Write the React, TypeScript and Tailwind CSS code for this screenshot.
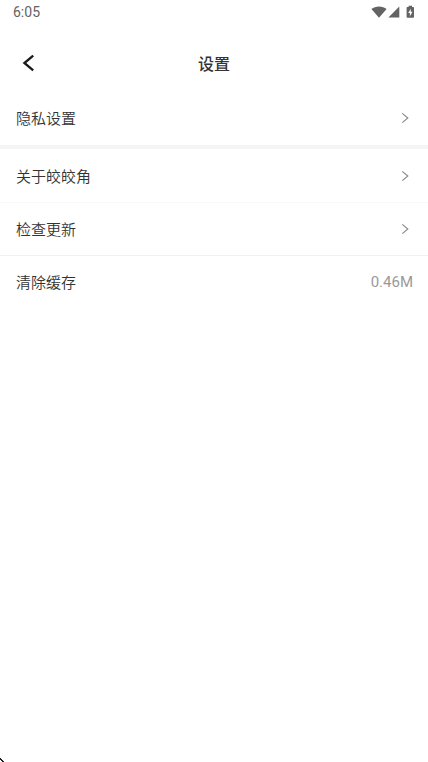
import React from 'react';
import clsx from 'clsx';

interface SettingRowProps {
  label: string;
  value?: string;
  className?: string;
}

const StatusBar: React.FC = () => (
  <div className="flex h-6 items-center justify-between px-[13px] text-[#636363]">
    <span className="font-['Roboto',sans-serif] text-[14px] leading-6">6:05</span>
    <div className="flex items-center">
      <svg width="16" height="12" viewBox="0 0 16 12" fill="currentColor" aria-hidden="true">
        <path d="M0.4 3.1C2.5 1.3 5.1 0.4 8 0.4s5.5 0.9 7.6 2.7L8 11.8z" />
      </svg>
      <svg className="ml-px" width="12" height="12" viewBox="0 0 12 12" fill="currentColor" aria-hidden="true">
        <path d="M11.3 0.6v11H0.4z" />
      </svg>
      <svg className="ml-[6px]" width="9" height="14" viewBox="0 0 9 14" fill="currentColor" aria-hidden="true">
        <path
          fillRule="evenodd"
          d="M2.6 0.8h3.4v1.2h1.2c0.5 0 0.8 0.3 0.8 0.8v9.2c0 0.5-0.3 0.8-0.8 0.8H1.4c-0.5 0-0.8-0.3-0.8-0.8V2.8c0-0.5 0.3-0.8 0.8-0.8h1.2zM4.8 3.8L2.2 8h1.7v3.2L6.5 6.8H4.8z"
        />
      </svg>
    </div>
  </div>
);

const SettingRow: React.FC<SettingRowProps> = ({ label, value, className }) => (
  <button
    type="button"
    className={clsx('flex h-[53px] w-full items-center justify-between pl-4 pr-[15px] text-left', className)}
  >
    <span className="text-[15px] font-[350] leading-6 text-[#333333]">{label}</span>
    {value ? (
      <span className="font-['Roboto',sans-serif] text-[15px] leading-6 text-[#999999]">{value}</span>
    ) : (
      <svg className="mr-[4px]" width="8" height="12" viewBox="0 0 8 12" fill="none" aria-hidden="true">
        <path d="M1.3 1.4L6.8 6L1.3 10.6" stroke="#8c8c8c" strokeWidth="1.2" />
      </svg>
    )}
  </button>
);

const App: React.FC = () => {
  return (
    <div className="relative min-h-screen overflow-hidden bg-white font-['Noto_Sans_CJK_SC',sans-serif]">
      <StatusBar />
      <header className="mt-[10px] grid h-[57px] grid-cols-[1fr_auto_1fr] items-center px-[15px]">
        <button type="button" aria-label="返回" className="flex h-8 w-8 items-center pl-[7px]">
          <svg width="14" height="18" viewBox="0 0 14 18" fill="none" aria-hidden="true">
            <path d="M11.2 1.6L2.4 9L11.2 16.4" stroke="#1a1a1a" strokeWidth="2.3" />
          </svg>
        </button>
        <h1 className="text-[16px] font-medium leading-6 text-[#333333]">设置</h1>
      </header>
      <main>
        <SettingRow label="隐私设置" />
        <div className="mt-px h-1 bg-[#f5f5f5]" />
        <SettingRow label="关于皎皎角" />
        <SettingRow label="检查更新" className="border-t border-[#f8f8f8]" />
        <SettingRow label="清除缓存" value="0.46M" className="border-t border-[#f0f0f0]" />
      </main>
      <svg className="absolute bottom-0 left-0" width="5" height="5" viewBox="0 0 5 5" aria-hidden="true">
        <path d="M0 1h1v1h1v1h1v1h1V5H2V4H1V3H0z" fill="#1a1a1a" />
      </svg>
    </div>
  );
};

export default App;
